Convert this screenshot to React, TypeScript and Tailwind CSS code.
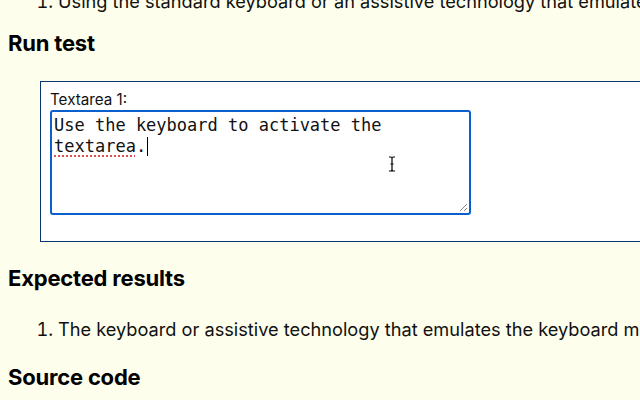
export default function App() {
  return (
    <div className="w-[640px] h-[400px] overflow-hidden bg-[#fefeec] text-[#111] font-['Inter',sans-serif]">
      <div className="-mt-[10px] pl-2">
        <ol className="list-decimal pl-[50px] text-[18.2px] leading-[22px]">
          <li className="whitespace-nowrap">
            Using the standard keyboard or an assistive technology that emulates the keyboard
          </li>
        </ol>

        <h2 className="mt-[16px] text-[22px] font-bold leading-[30px] tracking-[-0.2px] text-black">Run test</h2>

        <div className="mt-[23px] ml-8 w-[640px] h-[161px] border border-[#0a3570] bg-white pl-[9px] pt-[8px]">
          <label className="block text-[15.2px] leading-[20px] text-[#111]">Textarea 1:</label>
          <div className="relative w-[421px] h-[105px] rounded-[3px] border-2 border-[#0b5fcc] px-[2px] pt-[3px] font-['DejaVu_Sans_Mono',monospace] text-[17px] leading-[21px] text-[#111]">
            <div>Use the keyboard to activate the</div>
            <div className="flex items-center">
              <span className="underline decoration-dotted decoration-[#e05050] decoration-2 underline-offset-[3px]">
                textarea
              </span>
              <span>.</span>
              <span className="ml-[1px] inline-block h-[19px] w-[1px] bg-black" />
            </div>
            <svg className="absolute right-[1px] bottom-[1px]" width="9" height="9" viewBox="0 0 9 9">
              <path d="M8 1 L1 8 M8 5 L5 8" stroke="#888" strokeWidth="1" />
            </svg>
            <svg className="absolute left-[336px] top-[44px]" width="8" height="16" viewBox="0 0 8 16">
              <path
                d="M1 1 H3 Q4 1 4 3 V13 Q4 15 3 15 H1 M7 1 H5 Q4 1 4 3 M4 13 Q4 15 5 15 H7 M2.5 8 H5.5"
                stroke="#000"
                strokeWidth="1.2"
                fill="none"
              />
            </svg>
          </div>
        </div>

        <h2 className="mt-[21px] text-[22px] font-bold leading-[30px] tracking-[-0.2px] text-black">Expected results</h2>

        <ol className="mt-[25px] list-decimal pl-[50px] text-[18.2px] leading-[22px]">
          <li className="whitespace-nowrap">
            The keyboard or assistive technology that emulates the keyboard moves focus
          </li>
        </ol>

        <h2 className="mt-[22px] text-[22px] font-bold leading-[30px] tracking-[-0.2px] text-black">Source code</h2>
      </div>
    </div>
  );
}
